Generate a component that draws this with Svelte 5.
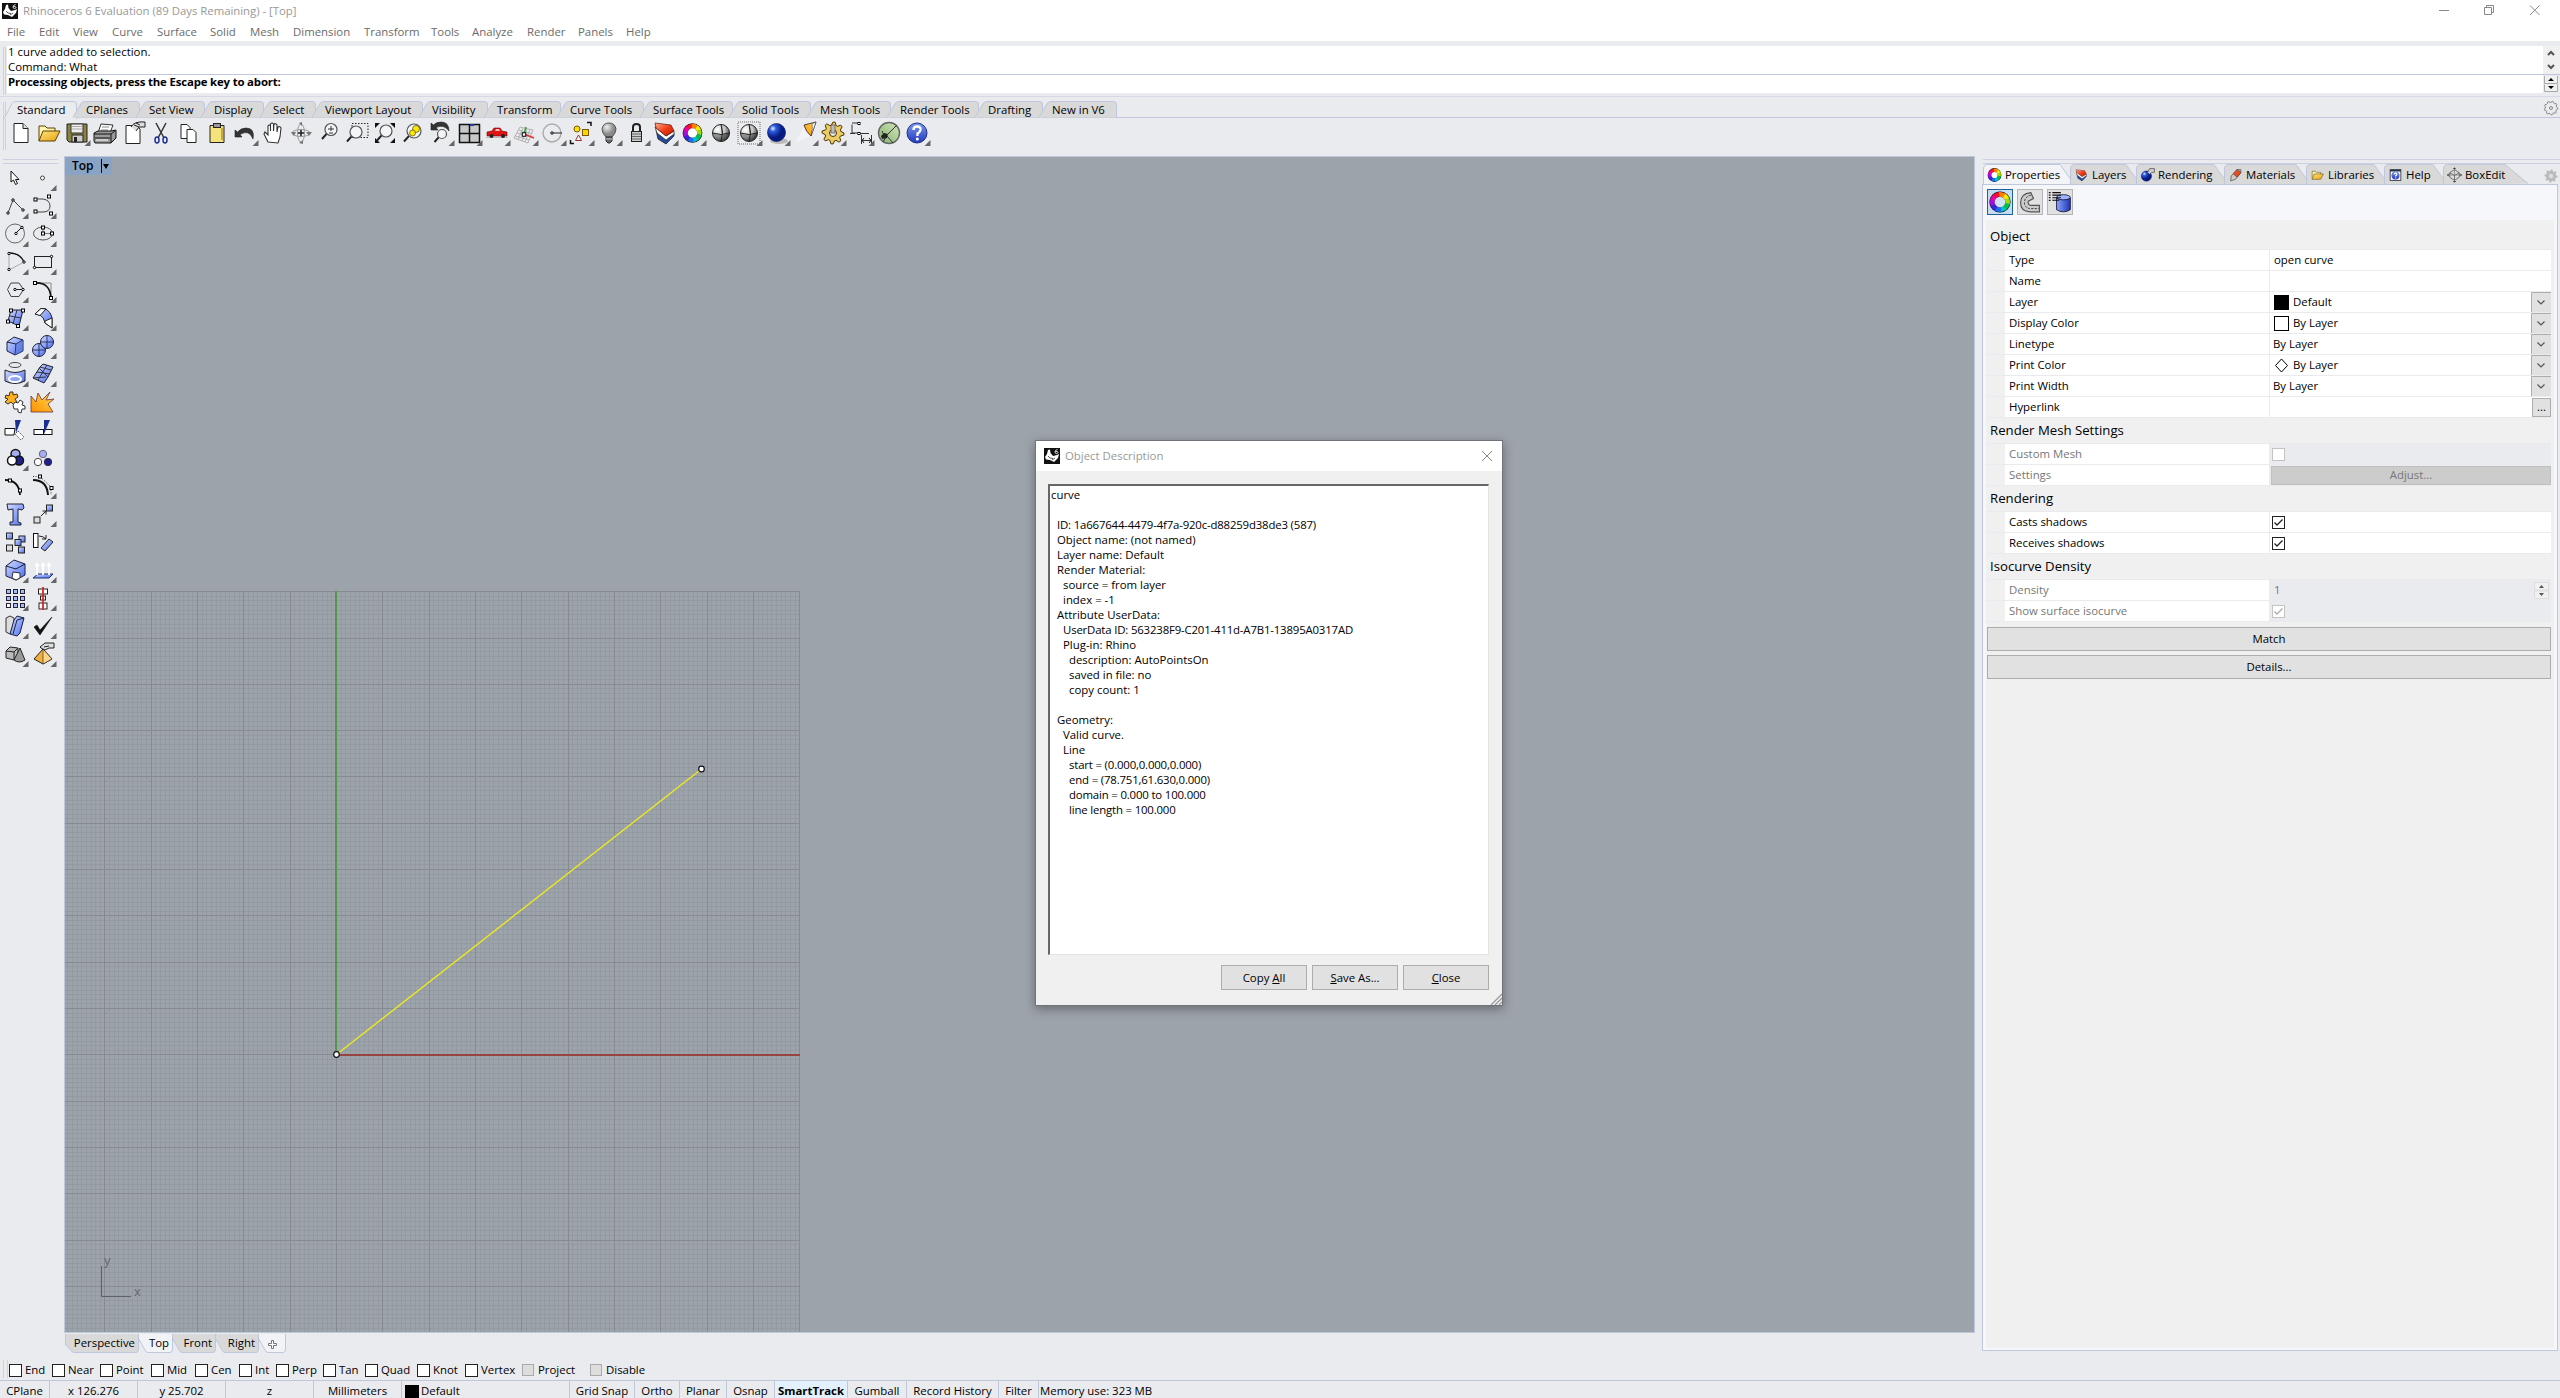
<script>
  const menus = [
    ['File', 32], ['Edit', 34], ['View', 39], ['Curve', 45], ['Surface', 53], ['Solid', 40], ['Mesh', 43],
    ['Dimension', 71], ['Transform', 67], ['Tools', 41], ['Analyze', 55], ['Render', 51], ['Panels', 48], ['Help', 40]
  ];

  // label, right edge
  const toolTabs = [
    ['Standard', 76], ['CPlanes', 139], ['Set View', 204], ['Display', 263], ['Select', 315], ['Viewport Layout', 422],
    ['Visibility', 487], ['Transform', 560], ['Curve Tools', 643], ['Surface Tools', 732], ['Solid Tools', 810],
    ['Mesh Tools', 890], ['Render Tools', 978], ['Drafting', 1042], ['New in V6', 1116]
  ].map(([label, end], i, all) => ({ label, start: i ? all[i - 1][1] : 7, end, w: end - (i ? all[i - 1][1] : 7) }));

  const sq = (x, y, s = 3, f = '#fff') => `<rect x="${x - s / 2}" y="${y - s / 2}" width="${s}" height="${s}" fill="${f}" stroke="#000"/>`;
  const dot = (x, y) => `<circle cx="${x}" cy="${y}" r="1.2" fill="#fff" stroke="#000"/>`;
  const wheel = (cx, cy, r, sw, inner = '#fff') => {
    const cols = ['#ffe800', '#9be000', '#00c24a', '#00c0c8', '#1c6cf0', '#3a22e0', '#a010e0', '#f000a8', '#f01030', '#ff8000'];
    const n = cols.length;
    let s = `<circle cx="${cx}" cy="${cy}" r="${r + sw / 2 + 0.6}" fill="#111"/>`;
    cols.forEach((c, i) => {
      const a = ((i / n) * 360 - 60) * Math.PI / 180, b = (((i + 1.08) / n) * 360 - 60) * Math.PI / 180;
      s += `<path d="M${(cx + r * Math.cos(a)).toFixed(2)} ${(cy + r * Math.sin(a)).toFixed(2)}A${r} ${r} 0 0 1 ${(cx + r * Math.cos(b)).toFixed(2)} ${(cy + r * Math.sin(b)).toFixed(2)}" fill="none" stroke="${c}" stroke-width="${sw}"/>`;
    });
    return s + `<circle cx="${cx}" cy="${cy}" r="${r - sw / 2}" fill="${inner}"/>`;
  };
  const lens = (cx, cy, r, f = '#f4f5f7') => `<path d="M${cx - r * 0.7} ${cy + r * 0.7}L${cx - r - 3} ${cy + r + 3.5}" stroke="#222" stroke-width="2"/><circle cx="${cx}" cy="${cy}" r="${r}" fill="${f}" stroke="#555" stroke-width="1.2"/>`;
  const layers = '<path d="M5 11L15 20L23 14V17L15 25L7 20Z" fill="#234a9c" stroke="#111" stroke-width=".7"/><path d="M4 8L15 17L23 12V15L15 21L6 14Z" fill="#fff" stroke="#222" stroke-width=".7"/><path d="M4 4L20 6L23 12L15 17L5 9Z" fill="url(#red)" stroke="#511" stroke-width=".7"/>';
  const folder = '<path d="M4 22V7H10L12 9H20V12" fill="#fff3b0" stroke="#5a4300"/><path d="M4 22L8 12H25L20 22Z" fill="url(#gold)" stroke="#5a4300"/>';
  const gearPath = (cx, cy, r, n, d) => {
    let p = '';
    for (let i = 0; i < n * 4; i++) {
      const a = (i / (n * 4)) * Math.PI * 2, k = i % 4 < 2 ? r : r - d;
      p += `${i ? 'L' : 'M'}${(cx + k * Math.cos(a)).toFixed(1)} ${(cy + k * Math.sin(a)).toFixed(1)}`;
    }
    return p + 'Z';
  };
  const metal = '<circle cx="14" cy="14" r="8.500" fill="url(#ball)" stroke="#222"/><path d="M14 14V5.500Q17 9 16 14ZM5.500 14Q14 17 22.500 14Q22 22 14 22.500Q6 22 5.500 14Z" fill="#222" opacity=".35"/><path d="M14 5.500Q17 14 14 22.500M5.500 14Q14 17 22.500 14" fill="none" stroke="#222"/>';

  const top = [
    ['<path d="M7 4.500H16L21 9.500V23.500H7Z" fill="#fff" stroke="#222"/><path d="M16 4.500V9.500H21" fill="#ddd" stroke="#222"/>'],
    [folder],
    ['<path d="M4 5H24V23H6L4 21Z" fill="#8b8340" stroke="#222"/><rect x="8" y="5" width="12" height="9" fill="#eee" stroke="#333"/><path d="M9 7.500H19M9 10H19" stroke="#aaa"/><rect x="9" y="16" width="11" height="7" fill="#ccc" stroke="#222"/><rect x="11" y="18" width="3" height="5" fill="#222"/>', 1],
    ['<path d="M10 5L22 6L19 14H7Z" fill="#fff" stroke="#333"/><path d="M11 8H18M10 11H17" stroke="#888"/><path d="M3 14L7 12H20L25 11V19L20 24H4L3 22Z" fill="#999" stroke="#111"/><path d="M3 15H20L24 12M4 19H19M20 15V24" stroke="#111" fill="none"/><path d="M5 21H17" stroke="#fff"/>'],
    ['<path d="M7 6.500H17L21 10V24.500H7Z" fill="#fff" stroke="#222"/><path d="M12 8Q15 2 26 3V8H20L17 12" fill="#ddd" stroke="#222"/><path d="M15 6L20 8M17 4L21 6" stroke="#222"/>'],
    ['<path d="M9 4L17 19M19 4L11 19" stroke="#333" stroke-width="1.500"/><ellipse cx="10" cy="21" rx="2" ry="3" fill="none" stroke="#1e2f8c" stroke-width="1.500"/><ellipse cx="18" cy="21" rx="2" ry="3" fill="none" stroke="#1e2f8c" stroke-width="1.500"/>'],
    ['<path d="M6 5.500H12L15 8.500V19.500H6Z" fill="#fff" stroke="#222"/><path d="M12 10.500H18L21 13.500V23.500H12Z" fill="#fff" stroke="#222"/>'],
    ['<path d="M7 6.500H21V23.500H7Z" fill="#f4e27c" stroke="#222"/><rect x="10.500" y="4.500" width="7" height="4" fill="#999" stroke="#222"/><path d="M19 9V21" stroke="#c5a93f" stroke-width="2"/>'],
    ['<path d="M4 11V18H11L9 15.500Q18 10 22 20Q24 9 15 9Q10 9 6.500 13Z" fill="#333" stroke="#222" stroke-width=".6"/>', 1],
    ['<path d="M9 23L5 15L6 13L9 16V7Q10 5 11.500 7V12V5Q13 3 14.500 5V12L15 5Q16.500 4 18 6V13L19 8Q21 7 22 9L21 18L19 24Z" fill="#fff" stroke="#333" stroke-width="1.100"/>'],
    ['<ellipse cx="14" cy="14" rx="9" ry="3.500" fill="none" stroke="#999"/><ellipse cx="14" cy="14" rx="3.500" ry="9" fill="none" stroke="#999"/><path d="M11 14H17M14 11V17" stroke="#222" stroke-width="1.600"/><path d="M4 13L7 17L9 13ZM19 13L22 17L25 13ZM12 4L15 3V7ZM12 24L16 21V25Z" fill="#777"/>'],
    [lens(16, 10.500, 6) + '<path d="M13 10H19M16 7V12M14 14H18" stroke="#333"/>'],
    ['<rect x="9" y="4.500" width="16" height="14" fill="none" stroke="#222" stroke-dasharray="1.500 1.500"/>' + lens(13, 13, 6)],
    ['<path d="M4 9V4H9L4 9M19 4H24V9L19 4M24 19V24H19L24 19M4 19V24H9Z" fill="#111"/>' + lens(15, 12, 6)],
    [lens(15, 12, 7) + '<circle cx="17" cy="10" r="3.500" fill="#ffe800" stroke="#333" stroke-width=".6"/><circle cx="13.500" cy="14" r="3" fill="#ffe800" stroke="#333" stroke-width=".6"/>'],
    ['<path d="M4 4V11H11L9 8.500Q17 5 22 12Q22 3 14 3Q9 3 6.500 6Z" fill="#333" stroke="#222" stroke-width=".6"/>' + lens(15, 15, 4.500), 1],
    ['<rect x="4.500" y="5.500" width="20" height="18" fill="#c8c8c8" stroke="#111" stroke-width="1.500"/><path d="M14.500 5V24M4 14.500H25" stroke="#111" stroke-width="1.500"/><path d="M15 6H19" stroke="#2238b0" stroke-width="2"/>', 1],
    ['<path d="M3 18.500H25" stroke="#bbb"/><path d="M4 17V13L9 12L11 9H17L19 12L24 13V17Z" fill="#e01414" stroke="#700" stroke-width=".6"/><path d="M12 12L13 10H16L17 12Z" fill="#fbb"/><circle cx="8.500" cy="17" r="2" fill="#222"/><circle cx="20" cy="17" r="2" fill="#222"/>', 1],
    ['<path d="M9 8L22 11L17 24L3 19ZM12 9L7 20.500M16 10L11 22M19 10.500L14 23M7.500 11L20.500 14.500M6 14L19 17.500M4.500 17L18 21" fill="none" stroke="#aaa" stroke-width=".9"/><path d="M13 15L23 19" stroke="#d33" stroke-width="1.500"/><path d="M13 15L15 8" stroke="#2a2" stroke-width="1.500"/>' + sq(13, 15.500, 3.500), 1],
    ['<circle cx="13" cy="14" r="9" fill="none" stroke="#aaa" stroke-width="1.400"/><path d="M13 14H23" stroke="#222"/>' + dot(13, 14), 1],
    ['<circle cx="10" cy="10" r="3" fill="#ffe000" stroke="#7a5a00"/><rect x="15.500" y="10.500" width="6" height="6" fill="#ffd400" stroke="#7a5a00"/><path d="M11.500 16L8.500 21.500H14.500Z" fill="#fff" stroke="#933"/><path d="M20 3.500H24V7M3.500 21V24.500H7" fill="none" stroke="#111" stroke-width="1.500"/>', 1],
    ['<path d="M11 18Q7 14 7 10Q8 4 14 4Q20 4 21 10Q21 14 17 18Z" fill="url(#grey)" stroke="#555"/><path d="M11 18H17V22L15 24H13L11 22Z" fill="#666" stroke="#333"/><path d="M11 20H17" stroke="#ccc"/>', 1],
    ['<path d="M10 12V8Q10 5 13.500 5Q17 5 17 8V12" fill="none" stroke="#222" stroke-width="2"/><rect x="8.500" y="12.500" width="10" height="10" fill="#ccc" stroke="#222"/><path d="M9 15H18M9 17.500H18M9 20H18" stroke="#666"/>', 1],
    [layers, 1],
    [wheel(13.500, 14, 7, 4.500), 1],
    [metal],
    ['<rect x="3" y="3" width="22" height="22" fill="none" stroke="#aaa" stroke-width="2" stroke-dasharray="1 1"/>' + metal, 1],
    ['<ellipse cx="16" cy="22" rx="9" ry="3" fill="#bbb"/><circle cx="13.500" cy="13.500" r="9" fill="url(#blueball)" stroke="#06186a" stroke-width=".7"/>', 1],
    ['<path d="M4 24L12 9L19 17Z" fill="#fff" opacity=".4"/><path d="M13 6L25 3L20 17Q15 13 13 6Z" fill="url(#orange)" stroke="#222" stroke-width=".8"/><path d="M25 3L20 17Q22 9 21 5Z" fill="#fff" stroke="#444" stroke-width=".6"/>', 1],
    [`<path d="${gearPath(14, 14, 11, 8, 3)}" fill="#eccb62" stroke="#4a3300"/><circle cx="14" cy="14" r="3.500" fill="#eaebef" stroke="#4a3300"/><rect x="12" y="6" width="4" height="8" fill="#bbb" stroke="#555" stroke-width=".7"/>`, 1],
    ['<path d="M5 5.500V14M3 14.500H8M5 4H12M12 14.500H22M14.500 16V25M24.500 16V25M15 21.500H24M5 14L12 14" fill="none" stroke="#333"/><path d="M17 19L15 21.500L17 24M22 19L24 21.500L22 24" fill="none" stroke="#111"/>' + sq(12, 4.500, 2) + sq(12, 14.500, 2), 1],
    ['<circle cx="14" cy="14" r="10.500" fill="url(#green)" stroke="#666" stroke-width="1.400"/><path d="M22 6L13 15M7 12L9 16M12 17L18 24M8 23L11 18" stroke="#333" stroke-width="1"/><path d="M6 17L9 14L13 15L12 19L7 20Z" fill="#222"/>'],
    ['<circle cx="14" cy="14" r="10" fill="url(#help)" stroke="#1d2f8a"/><path d="M10.500 11Q10.500 7.500 14 7.500Q18 7.500 17.500 11Q17 13 14.500 14.500V17" fill="none" stroke="#fff" stroke-width="2.300"/><circle cx="14.300" cy="20" r="1.500" fill="#fff"/>', 1]
  ];

  const side = [
    ['<path d="M10 7V18L12.500 16L14.500 20.500L16.500 19.500L14.500 15.500H18Z" fill="#fff" stroke="#111"/>'],
    ['<circle cx="13.500" cy="14" r="2" fill="#fff" stroke="#444"/>', 1],
    ['<path d="M7 21L12 8L22 18" fill="none" stroke="#444"/>' + dot(7, 21) + dot(12, 8) + dot(22, 18), 1],
    ['<path d="M6 7H14Q21 8 21 14Q21 20 14 20H6" fill="none" stroke="#444"/>' + sq(6.5, 7.5) + sq(20, 4.5) + sq(6.5, 19.5) + sq(22, 21.5), 1],
    ['<circle cx="14" cy="13.500" r="9.500" fill="none" stroke="#666"/><path d="M15 13L21 7" stroke="#111"/>' + dot(15, 13.5) + dot(21, 7.5), 1],
    ['<ellipse cx="14" cy="13.500" rx="9.500" ry="6.500" fill="none" stroke="#555"/><path d="M14 7V13.500H23" fill="none" stroke="#777"/>' + sq(14, 7.5) + sq(14, 13.5) + sq(23, 13.5), 1],
    ['<path d="M8 5V22L23 14" fill="none" stroke="#aaa"/><path d="M8 5Q19 5 23 14" fill="none" stroke="#111" stroke-width="1.300"/>' + dot(8, 5.5) + dot(8, 21.5) + dot(23, 14), 1],
    ['<rect x="5.500" y="8.500" width="17" height="11" fill="none" stroke="#222"/>' + dot(5.5, 19.5) + dot(22.5, 8.5), 1],
    ['<path d="M10 7H18L22.500 13.500L18 20.500H10L6.500 13.500Z" fill="none" stroke="#444"/><path d="M14 13.500H22" stroke="#222"/>' + dot(14, 13.5) + dot(22, 13.5), 1],
    ['<path d="M6 7H22V22" fill="none" stroke="#888"/><path d="M6 7Q21 6 22 22" fill="none" stroke="#111" stroke-width="1.700"/>' + sq(6, 7) + sq(22, 22), 1],
    ['<path d="M10 6H22L18 22L7 17Z" fill="url(#blue)" stroke="#222"/><path d="M16 6L12 20M9 12L20 14" stroke="#334" fill="none"/>' + sq(10, 6.5) + sq(22, 6.5) + sq(7, 17.5) + sq(17, 22), 1],
    ['<path d="M6 10L12 4.500H16Q22 8 23 14V24L16 19Q15 13 11 11Z" fill="url(#blue)" stroke="#222"/><path d="M6 10L12 4.500L17 5L11 11.500ZM16 17L23 14V24L16 19Z" fill="#fff" stroke="#222"/>', 1],
    ['<path d="M6 10L13 5L22 8V19L14 23L6 19Z" fill="url(#blue)" stroke="#1a2040"/><path d="M6 10L15 12L22 8M15 12L14 23" fill="none" stroke="#1a2040"/><path d="M15 12L22 8V19L14 23Z" fill="#5a78d8" opacity=".6"/>', 1],
    ['<circle cx="10" cy="18" r="6.500" fill="url(#blue)" stroke="#1a2040"/><circle cx="18" cy="10" r="6.500" fill="url(#blue)" stroke="#1a2040"/><path d="M18 4V16M12 10H24M10 12V24M4 18H16" stroke="#1a2040" stroke-width=".8"/>', 1],
    ['<ellipse cx="14" cy="5" rx="6" ry="2.500" fill="none" stroke="#444"/><path d="M4 10Q14 15 24 10V21Q14 26 4 21Z" fill="url(#blue)" stroke="#222"/><ellipse cx="14" cy="19" rx="6" ry="3" fill="#8fa4f0" stroke="#fff" stroke-width="2"/>', 1],
    ['<path d="M4 18L11 7L14 4L24 7L19 17L15 23Z" fill="url(#blue)" stroke="#222"/><path d="M8 12L21 14M11 7L22 10M9 20L18 5M4 18L17 17M10 8L19 17" fill="none" stroke="#334"/>', 1],
    ['<path d="M5 7L8 8L9 4L12 4V7L16 6L17 9L14 11L16 14L13 17L10 14L7 16L4 14L7 11L4 10Z" fill="#ffb01c" stroke="#333"/><path d="M12 17L14 14L17 15L19 12L22 14L21 17L24 18V21L21 21L20 25L17 24L17 21L13 21Z" fill="#fff" stroke="#333"/>'],
    ['<path d="M2 24V8L7 14L9 5L13 12L21 4L17 12L25 11L19 16L24 24Z" fill="url(#orange)" stroke="#633" stroke-width=".8"/>'],
    ['<path d="M4 12.500H14L13 19H4Z" fill="#fff" stroke="#111"/><path d="M14 4H20L15 17Z" fill="#1a2f90"/><path d="M17 15L23 21L20 24L14 18Z" fill="#fff" stroke="#555" stroke-dasharray="1.500 1"/>'],
    ['<rect x="5" y="13.500" width="18" height="5" fill="#fff" stroke="#111"/><path d="M14.500 13V19" stroke="#111"/><path d="M15 4H21L15 18Z" fill="#1a2f90"/>'],
    ['<circle cx="14.500" cy="10" r="4.500" fill="#a4aef0" stroke="#111" stroke-width="1.500"/><circle cx="18" cy="16.500" r="4.500" fill="#20208c" stroke="#111" stroke-width="1.500"/><circle cx="11" cy="16.500" r="4.500" fill="#fff" stroke="#111" stroke-width="1.500"/>', 1],
    ['<circle cx="14" cy="10" r="3.700" fill="#a4aef0" stroke="#667"/><circle cx="19" cy="18" r="3.700" fill="#20208c" stroke="#334"/><circle cx="9" cy="18" r="3.700" fill="#fff" stroke="#444"/>'],
    ['<path d="M4 8Q18 8 19 23" fill="none" stroke="#111" stroke-width="1.800"/>' + sq(9, 8.5) + sq(19, 18.5)],
    ['<path d="M4 4.500H11L22 15V23" fill="none" stroke="#333" stroke-dasharray="1 1.500"/><path d="M4 8Q18 8 19 23" fill="none" stroke="#111" stroke-width="2"/>' + sq(11, 4.5) + sq(22.5, 16), 1],
    ['<path d="M6 4H22L23 8L21 10L17 9V22L20 23V25H9V22L12 22V9L7 10Z" fill="url(#blue)" stroke="#223"/>'],
    ['<rect x="5" y="17" width="6" height="6" fill="#ddd" stroke="#222"/><rect x="17.500" y="5" width="6" height="6" fill="url(#blue)" stroke="#222"/><path d="M12 16L17 11M13.500 11H17V14.500" fill="none" stroke="#222"/>', 1],
    ['<g stroke="#222"><rect x="5.500" y="5" width="6" height="6" fill="url(#blue)"/><rect x="18" y="8" width="6" height="6" fill="url(#blue)"/><rect x="14" y="11.500" width="6" height="6" fill="url(#blue)"/><rect x="5.500" y="17" width="6" height="6" fill="#ddd"/><rect x="17.500" y="19" width="6" height="6" fill="url(#blue)"/></g>'],
    ['<rect x="4.500" y="5.500" width="4.500" height="14" fill="#fff" stroke="#111"/><path d="M10 8Q14 8 17 11M17 7V11H13" fill="none" stroke="#222"/><path d="M12 20L20 11L24 14L16 23Z" fill="url(#blue)" stroke="#222"/>'],
    ['<path d="M5 10L13 4L24 8V19L15 24L5 20Z" fill="url(#blue)" stroke="#1a2040"/><path d="M5 10L15 13L24 8" fill="none" stroke="#1a2040"/><path d="M12 16L19 17V22L15 24L11 22Z" fill="#fff" stroke="#333"/>', 1],
    ['<path d="M4 22L9 18H24L20 22Z" fill="url(#blue)" stroke="#1a2f70"/><path d="M8 19V9M14 19V9M20 19V9" stroke="#fff" stroke-width="1.800"/><path d="M5.500 10L8 6L10.500 10ZM11.500 10L14 6L16.500 10ZM17.500 10L20 6L22.500 10Z" fill="#fff"/>', 1],
    [[5, 12, 19].map((y) => [5, 12, 19].map((x) => `<rect x="${x + 0.5}" y="${y + 0.5}" width="4" height="4" fill="${x === 5 && y === 19 ? '#fff' : '#a9b9ff'}" stroke="#223"/>`).join('')).join(''), 1],
    ['<g fill="#fff" stroke="#222"><rect x="9.500" y="5" width="9" height="5"/><rect x="11.500" y="12" width="5" height="4"/><rect x="10" y="19" width="8" height="6"/></g><path d="M14 3V26" stroke="#d22" stroke-width="1.800"/>', 1],
    ['<path d="M5 6L9 4L13 6V20L9 22L5 20Z" fill="#ddd" stroke="#333"/><path d="M13 8L16 4L23 6L19 21L16 24L9 22Z" fill="url(#blue)" stroke="#1a2040"/><path d="M16 8L12 22M16 8L23 6" fill="none" stroke="#1a2040"/>', 1],
    ['<path d="M5 15L8 13L11 18L23 5L11 23Z" fill="#111" stroke="#111" stroke-width=".6"/>', 1],
    ['<path d="M5 11L9 7L17 8V15L13 20L5 18Z" fill="#bbb" stroke="#222"/><path d="M5 11L13 12L17 8M13 12V20" fill="none" stroke="#222"/><path d="M19 8L24 20Q18 24 13 20Z" fill="#999" stroke="#222"/>', 1],
    ['<path d="M14 9L23 19L14 24L5 19Z" fill="#f0b040" stroke="#222"/><path d="M14 9L14 24L23 19Z" fill="#fbd68a" stroke="#222" stroke-width=".6"/><path d="M11 7L16 3H25V8H20L16 10L12 8Z" fill="#ddd" stroke="#222"/><path d="M15 7L20 6" stroke="#222"/>', 1]
  ];

  const help = '<rect x="4" y="4" width="20" height="20" fill="#fff" stroke="#223" stroke-width="1.500"/><path d="M4 6H24" stroke="#234" stroke-width="3"/><circle cx="14" cy="15" r="7.500" fill="url(#help)"/><path d="M11.500 13Q12 10.500 14 10.500Q17 11 16.500 13Q16 14.500 14.300 15.500V17" fill="none" stroke="#fff" stroke-width="2"/><circle cx="14.300" cy="19.500" r="1.200" fill="#fff"/>';
  const panelTabs = [
    ['Properties', 2070, wheel(14, 14, 9, 6.5)],
    ['Layers', 2136, layers],
    ['Rendering', 2224, '<circle cx="12" cy="16" r="9.500" fill="url(#blueball)" stroke="#06186a"/><path d="M14 9L18 2H27V9H22L18 13Z" fill="#ccc" stroke="#222"/>'],
    ['Materials', 2306, '<path d="M5 25L6 16L16 4L24 4L24 10L14 22Z" fill="#ccc" stroke="#222"/><path d="M10 12L18 4L24 9L17 18Z" fill="#e8501c" stroke="#522"/>'],
    ['Libraries', 2384, folder],
    ['Help', 2443, help],
    ['BoxEdit', 2528, '<path d="M14 4L23 10V18L14 24L5 18V10ZM5 10L14 15L23 10M14 15V24" fill="#ddd" stroke="#555" stroke-width="1.500"/><path d="M14 0V28M0 14H28" stroke="#777" stroke-width="1.300"/><path d="M11 3L14 0L17 3ZM11 25L14 28L17 25ZM3 11L0 14L3 17ZM25 11L28 14L25 17Z" fill="#333"/>']
  ].map(([label, end, icon], i, all) => ({ label, icon, w: end - (i ? all[i - 1][1] : 1983), first: i === 0, last: i === all.length - 1 }));

  const panelTools = [
    wheel(14, 14, 9, 5.5, '#cfe3f5'),
    '<path d="M15 3Q3 4 3 15Q3 25 14 25.500H25V18H16Q11 18 12 13L18 10Z" fill="#ccc" stroke="#555" stroke-width="1.400"/><path d="M15 6Q7.500 8 7.500 15Q8 21.500 15 21.700H24" fill="none" stroke="#222" stroke-dasharray="2.500 1.500"/>',
    '<path d="M10 9V23Q18 28 26 23V9Z" fill="url(#cyl)" stroke="#113"/><ellipse cx="18" cy="8.500" rx="8" ry="3" fill="#9fb4ff" stroke="#113"/><path d="M5 3H15M5 6H15M5 9H15M5 12H13" stroke="#111" stroke-width="1.300"/><path d="M1 3H3M1 6H3M1 9H3M1 12H3" stroke="#111" stroke-width="1.500"/>'
  ];

  const sections = [
    { title: 'Object', rows: [
      { k: 'Type', v: 'open curve' }, { k: 'Name', v: '' },
      { k: 'Layer', v: 'Default', sw: 'black', drop: true }, { k: 'Display Color', v: 'By Layer', sw: 'white', drop: true },
      { k: 'Linetype', v: 'By Layer', drop: true, tight: true }, { k: 'Print Color', v: 'By Layer', sw: 'diamond', drop: true },
      { k: 'Print Width', v: 'By Layer', drop: true, tight: true }, { k: 'Hyperlink', v: '', more: true }] },
    { title: 'Render Mesh Settings', rows: [{ k: 'Custom Mesh', off: true, box: true }, { k: 'Settings', off: true, adjust: true }] },
    { title: 'Rendering', rows: [{ k: 'Casts shadows', box: true, on: true }, { k: 'Receives shadows', box: true, on: true }] },
    { title: 'Isocurve Density', rows: [{ k: 'Density', v: '1', off: true, spin: true }, { k: 'Show surface isocurve', off: true, box: true, on: true }] }
  ];

  const report = `curve

  ID: 1a667644-4479-4f7a-920c-d88259d38de3 (587)
  Object name: (not named)
  Layer name: Default
  Render Material:
    source = from layer
    index = -1
  Attribute UserData:
    UserData ID: 563238F9-C201-411d-A7B1-13895A0317AD
    Plug-in: Rhino
      description: AutoPointsOn
      saved in file: no
      copy count: 1

  Geometry:
    Valid curve.
    Line
      start = (0.000,0.000,0.000)
      end = (78.751,61.630,0.000)
      domain = 0.000 to 100.000
      line length = 100.000`;
  const reportLines = report.split('\n').map((l) => ({ text: l.trim(), numeric: /\d{3}/.test(l), indent: (l.length - l.trimStart().length) * 3 }));

  const viewTabs = [['Perspective', 74], ['Top', 34], ['Front', 43], ['Right', 43], ['', 27]];
  const snaps = [['End', 43], ['Near', 48], ['Point', 51], ['Mid', 44], ['Cen', 44], ['Int', 37], ['Perp', 47], ['Tan', 42], ['Quad', 52], ['Knot', 48], ['Vertex', 57], ['Project', 68], ['Disable', 70]];
  const status = [['CPlane', 50], ['x 126.276', 88], ['y 25.702', 88], ['z', 88], ['Millimeters', 88], ['Default', 168], ['Grid Snap', 65], ['Ortho', 45], ['Planar', 47], ['Osnap', 48], ['SmartTrack', 73], ['Gumball', 59], ['Record History', 92], ['Filter', 40]];

  // Construction plane grid: 10 minor cells per major line
  const ox = 271, oy = 897.4, unit = 4.632;
  const grid = [];
  for (let i = -100; i <= 100; i++) {
    const x = Math.round(ox + i * unit), y = Math.round(oy - i * unit);
    const major = i % 10 === 0;
    if (x >= 0) grid.push({ x1: x + 0.5, x2: x + 0.5, y1: 434, y2: 1176, major });
    if (y <= 1176) grid.push({ x1: 0, x2: 734.5, y1: y + 0.5, y2: y + 0.5, major });
  }
  grid.sort((a, b) => a.major - b.major);
</script>

{#snippet cell(icon, fly)}
  <svg class="cell" viewBox="0 0 28 28" width="28" height="28">
    {@html icon}
    {#if fly}<path d="M27.500 21V27H21.500Z" fill="#666" />{/if}
  </svg>
{/snippet}

{#snippet rhino()}
  <svg class="rhino" viewBox="0 0 16 16" width="16" height="16">
    <rect width="16" height="16" fill="#111" />
    <path d="M1 9L3 6L4 2L6 1.500L6.500 5L9 8L13 7L15 6L14 10L10 14L6 12L2 11.500Z" fill="#fff" />
    <path d="M4 8L6 10L9 10.500M8 12L11 10" stroke="#333" stroke-width=".8" fill="none" />
    <path d="M13.500 1.500Q11 2 11 4Q11 5.500 12.500 5.500Q14 5.500 14 4.200Q14 3.200 11.500 3.600" stroke="#eee" stroke-width=".9" fill="none" />
  </svg>
{/snippet}

<svg class="defs" width="0" height="0">
  <defs>
    <linearGradient id="blue" x1="0" y1="0" x2="1" y2="1"><stop offset="0" stop-color="#d4dcff" /><stop offset="1" stop-color="#4a6cf0" /></linearGradient>
    <linearGradient id="red" x1="0" y1="0" x2="1" y2="1"><stop offset="0" stop-color="#ffb090" /><stop offset=".5" stop-color="#f04018" /><stop offset="1" stop-color="#c01800" /></linearGradient>
    <linearGradient id="gold" x1="0" y1="0" x2="1" y2="1"><stop offset="0" stop-color="#ffe680" /><stop offset="1" stop-color="#e8a010" /></linearGradient>
    <linearGradient id="orange" x1="0" y1="1" x2="1" y2="0"><stop offset="0" stop-color="#ff9000" /><stop offset="1" stop-color="#ffd850" /></linearGradient>
    <linearGradient id="cyl"><stop offset="0" stop-color="#8ca2ff" /><stop offset="1" stop-color="#1f35b0" /></linearGradient>
    <linearGradient id="help" x1="0" y1="0" x2="0" y2="1"><stop offset="0" stop-color="#7d98f0" /><stop offset="1" stop-color="#2038b8" /></linearGradient>
    <linearGradient id="green" x1="1" y1="0" x2="0" y2="1"><stop offset="0" stop-color="#cfe6b8" /><stop offset="1" stop-color="#86b070" /></linearGradient>
    <radialGradient id="grey" cx=".35" cy=".3"><stop offset="0" stop-color="#eee" /><stop offset="1" stop-color="#888" /></radialGradient>
    <radialGradient id="ball" cx=".3" cy=".3" r=".75"><stop offset="0" stop-color="#fff" /><stop offset=".55" stop-color="#c8c8c8" /><stop offset="1" stop-color="#444" /></radialGradient>
    <radialGradient id="blueball" cx=".3" cy=".28"><stop offset="0" stop-color="#e8f0ff" /><stop offset=".35" stop-color="#2c5ce0" /><stop offset="1" stop-color="#061a80" /></radialGradient>
  </defs>
</svg>

<div class="app">
  <header class="title">
    {@render rhino()}
    <span>Rhinoceros 6 Evaluation (89 Days Remaining) - [Top]</span>
    <svg class="winbtns" viewBox="0 0 106 22" width="106" height="22"><path d="M0 10.500H10M45.500 7.500H52.500V14.500H45.500ZM47.500 7V5.500H54.500V12.500H53M91 5.500L100.500 15M100.500 5.500L91 15" fill="none" stroke="#888" /></svg>
  </header>
  <nav class="menu">
    {#each menus as [label, w]}<span style:width="{w}px">{label}</span>{/each}
  </nav>

  <section class="command">
    <div class="grip"></div>
    <div class="cmdtext">
      <div class="history"><p>1 curve added to selection.</p><p>Command: What</p></div>
      <div class="prompt">Processing objects, press the Escape key to abort:</div>
    </div>
    <svg class="cmdscroll" viewBox="0 0 17 47" width="17" height="47">
      <rect width="17" height="28" fill="#f0f0f0" />
      <path d="M5 9L8 6L11 9M5 19L8 22L11 19" fill="none" stroke="#555" stroke-width="2" />
      <path d="M0 28.500H17" stroke="#c0c6da" />
      <path d="M1.500 30V37.500H14.500V30M1.500 38.500V45.500H14.500V38.500" fill="#f0f0f0" stroke="#aaa" />
      <path d="M5 35L8 32L11 35ZM5 40L8 43L11 40Z" fill="#000" />
    </svg>
  </section>

  <section class="tools">
    <div class="grip"></div>
    <div class="toolbody">
      <div class="tooltabs">
        {#each toolTabs as t, i}
          <div class="tooltab" style:width="{t.w}px">
            <svg class="shape" width={t.w + 2} height="18">
              <path d="M-3 {i ? 16.5 : 18}L5 2.500Q6 .500 9 .500H{t.w - 3}Q{t.w + 0.5} .500 {t.w + 0.5} 3V{i ? 16.5 : 18}" fill={i ? '#d9d9d9' : '#eaebef'} stroke="#bfc7dd" />
            </svg>
            <span>{t.label}</span>
          </div>
        {/each}
        <svg class="options" viewBox="0 0 16 16" width="16" height="16"><path d={gearPath(8, 8, 6.8, 9, 1.2)} fill="none" stroke="#888" /><circle cx="8" cy="8" r="1.500" fill="none" stroke="#888" /></svg>
      </div>
      <div class="iconrow">{#each top as [icon, fly]}{@render cell(icon, fly)}{/each}</div>
    </div>
  </section>

  <main>
    <aside class="side">{#each side as [icon, fly]}{@render cell(icon, fly)}{/each}</aside>

    <section class="view">
      <div class="viewport">
        <svg class="scene" width="1909" height="1176">
          {#each grid as g}<line x1={g.x1} y1={g.y1} x2={g.x2} y2={g.y2} class:major={g.major} class="minor" />{/each}
          <path d="M271 434V898" stroke="#4f9a4a" stroke-width="2" class="crisp" />
          <path d="M271 898H735" stroke="#99453f" stroke-width="2" class="crisp" />
          <path d="M271.500 897.500L636.500 612" stroke="#ecea1c" stroke-width="1.400" />
          <circle cx="271.500" cy="897.500" r="2.800" fill="#fff" stroke="#111" stroke-width="1.200" />
          <circle cx="636.500" cy="612" r="2.800" fill="#fff" stroke="#111" stroke-width="1.200" />
          <path d="M36.500 1109V1139.500H66" fill="none" stroke="#5e6266" />
          <text x="39" y="1108">y</text><text x="69" y="1139">x</text>
        </svg>
        <div class="vplabel"><b>Top</b><i></i></div>
      </div>
      <div class="viewtabs">
        {#each viewTabs as [label, w], i}
          <div class="viewtab" style:width="{w}px">
            <svg class="shape" width={w + 1} height="20"><path d="M{i ? -3 : 0.5} 0{i ? '' : 'V11'}L6 16Q7 18.500 9 18.500H{w - 3}Q{w - 0.5} 18.500 {w - 0.5} 15V0" fill={label === 'Top' || !label ? '#f2f3f6' : '#d9d9d9'} stroke="#bfc7dd" /></svg>
            {#if label}<span>{label}</span>{:else}
              <svg class="plus" viewBox="0 0 9 9" width="9" height="9"><path d="M3.500 .500H5.500V3.500H8.500V5.500H5.500V8.500H3.500V5.500H.500V3.500H3.500Z" fill="#fff" stroke="#777" /></svg>
            {/if}
          </div>
        {/each}
      </div>
    </section>

    <aside class="panel">
      <div class="ptabs">
        {#each panelTabs as t}
          <div class="ptab" style:width="{t.w}px">
            <svg class="shape" width={t.w + 6} height="21">
              <path d={t.last ? `M.5 21V4Q1 .5 4 .5H62L${t.w} 19.5` : `M.5 21V4Q1 .5 4 .5H${t.w - 10}L${t.w + 4} 20`} fill={t.first ? '#f3f4f8' : '#d9d9d9'} stroke="#bfc7dd" />
            </svg>
            <svg class="picon" viewBox="0 0 28 28" width="16" height="16">{@html t.icon}</svg>
            <span>{t.label}</span>
          </div>
        {/each}
        <svg class="pgear" viewBox="0 0 16 16" width="14" height="14"><path d={gearPath(8, 8, 7.5, 8, 1.8)} fill="#bbb" /><circle cx="8" cy="8" r="2.500" fill="#ddd" /></svg>
      </div>
      <div class="pbody">
        <div class="ptools">
          {#each panelTools as icon, i}
            <div class="ptool" class:active={i === 0}><svg viewBox="0 0 28 28" width="24" height="24">{@html icon}</svg></div>
          {/each}
        </div>
        <div class="props">
          {#each sections as s}
            <h3>{s.title}</h3>
            {#each s.rows as r}
              <div class="row" class:off={r.off}>
                <div class="key">{r.k}</div>
                <div class="val" class:tight={r.tight}>
                  {#if r.sw === 'diamond'}
                    <svg class="diamond" viewBox="0 0 15 15" width="15" height="15"><path d="M7.500 1L13.500 7.500L7.500 14L1.500 7.500Z" fill="#fff" stroke="#000" /></svg>
                  {:else if r.sw}<i class="swatch {r.sw}"></i>{/if}
                  {#if r.box}
                    <svg class="check" viewBox="0 0 13 13" width="13" height="13"><rect x=".5" y=".5" width="12" height="12" fill="#fff" stroke={r.off ? '#c3c3c3' : '#222'} />{#if r.on}<path d="M2.500 6.500L5 9L10.500 3.500" fill="none" stroke={r.off ? '#aaa' : '#222'} stroke-width="1.300" />{/if}</svg>
                  {/if}
                  {#if r.adjust}<div class="adjust">Adjust...</div>{/if}
                  {#if r.v}<span>{r.v}</span>{/if}
                  {#if r.drop}<svg class="drop" viewBox="0 0 20 20" width="20" height="20"><path d="M.5 20V.5H20" fill="#e1e1e1" stroke="#adadad" /><rect x="1" y="1" width="19" height="19" fill="#e1e1e1" /><path d="M6.500 8.500L10 12L13.500 8.500" fill="none" stroke="#555" stroke-width="1.200" /></svg>{/if}
                  {#if r.more}<div class="more">...</div>{/if}
                  {#if r.spin}<svg class="spin" viewBox="0 0 15 17" width="15" height="17"><path d="M.5 .5H14.500V8H.5ZM.5 9H14.500V16.500H.5Z" fill="#f0f0f0" stroke="#ddd" /><path d="M5 6L7.500 3L10 6ZM5 11L7.500 14L10 11Z" fill="#555" /></svg>{/if}
                </div>
              </div>
            {/each}
          {/each}
          <div class="wide first">Match</div>
          <div class="wide">Details...</div>
        </div>
      </div>
    </aside>
  </main>

  <section class="snaps">
    {#each snaps as [label, w], i}
      <div class="snap" style:width="{w}px"><i class:dis={i > 10}></i><span>{label}</span></div>
    {/each}
  </section>
  <footer class="status">
    {#each status as [label, w]}
      <div class="stat" class:left={label === 'Default'} class:hot={label === 'SmartTrack'} style:width="{w}px">{#if label === 'Default'}<i></i>{/if}{label}</div>
    {/each}
    <span>Memory use: 323 MB</span>
  </footer>

  <div class="dialog">
    <div class="dtitle">
      {@render rhino()}<span>Object Description</span>
      <svg viewBox="0 0 12 12" width="12" height="12"><path d="M1 1L11 11M11 1L1 11" stroke="#888" /></svg>
    </div>
    <div class="report">
      {#each reportLines as l}<p class:numeric={l.numeric} style:padding-left="{l.indent}px">{l.text}</p>{/each}
    </div>
    <div class="dbtns">
      <div class="dbtn">Copy&nbsp;<u>A</u>ll</div>
      <div class="dbtn"><u>S</u>ave As...</div>
      <div class="dbtn"><u>C</u>lose</div>
    </div>
    <svg class="resize" viewBox="0 0 12 12" width="12" height="12"><path d="M1 12L12 1M5 12L12 5M9 12L12 9" stroke="#999" stroke-width="1.300" /></svg>
  </div>
</div>

<style>
  :global(body) { margin: 0; overflow: hidden; }
  .defs { position: absolute; }
  .app { width: 2560px; height: 1398px; display: flex; flex-direction: column; background: #eaebef; font: 11.4px/16px 'Open Sans', sans-serif; color: #000; white-space: nowrap; overflow: hidden; position: relative; }
  .app * { box-sizing: border-box; }
  svg { display: block; flex: none; }
  p, h3 { margin: 0; font-weight: 400; }
  i { font-style: normal; }

  .title { height: 23px; background: #fff; display: flex; align-items: center; padding: 0 15px 1px 2px; color: #999; letter-spacing: -.03px; }
  .title span { margin-left: 5px; flex: 1; }
  .menu { height: 18px; background: #fff; display: flex; padding: 1px 0 0 7px; color: #6b6b6b; }

  .command { height: 56px; padding-top: 5px; display: flex; background: #eaebef; border-bottom: 1px solid #d5d9e6; }
  .grip { width: 3px; height: 48px; margin: 1px 1px 0 3px; border: solid #ccd0e0; border-width: 0 1px; flex: none; }
  .cmdtext { flex: 1; height: 47px; background: #fff; }
  .history { height: 29px; border-bottom: 1px solid #bfc7dd; padding: 0 1px; }
  .history p { line-height: 12px; height: 13px; }
  .history p + p { line-height: 16px; }
  .prompt { font-weight: 700; line-height: 14px; padding-left: 1px; letter-spacing: -.16px; }
  .cmdscroll { background: #eaebef; }

  .tools { height: 59px; padding-top: 4px; display: flex; }
  .toolbody { flex: 1; }
  .tooltabs { height: 17px; border-bottom: 1px solid #bfc7dd; display: flex; position: relative; }
  .tooltab { position: relative; flex: none; }
  .tooltab .shape { position: absolute; left: 0; top: 0; overflow: visible; }
  .tooltab span { position: absolute; left: 10px; top: 1px; }
  .options { margin: -1px 1px 0 auto; }
  .iconrow { display: flex; margin-top: 1px; }

  main { flex: 1; display: flex; min-height: 0; }
  .side { width: 64px; padding: 8px 0 0 1px; display: grid; grid-template-columns: 28px 28px; grid-auto-rows: 28px; align-content: start; position: relative; }
  .side::before { content: ''; position: absolute; left: 3px; top: 3px; width: 55px; height: 3px; border: solid #ccd0e0; border-width: 1px 0; }

  .view { width: 1911px; }
  .viewport { height: 1177px; border: 1px solid #bfc7dd; background: #9da3ab; position: relative; overflow: hidden; }
  .scene { display: block; }
  .minor { stroke: #949aa2; shape-rendering: crispEdges; }
  .major { stroke: #868a93; }
  .crisp { shape-rendering: crispEdges; }
  .scene text { font: 13px 'Open Sans', sans-serif; fill: #65696d; }
  .vplabel { position: absolute; left: 0; top: 0; width: 47px; height: 18px; background: #89a3c4; display: flex; align-items: center; padding-left: 7px; }
  .vplabel b { font-size: 12px; font-weight: 600; width: 29px; }
  .vplabel i { height: 14px; width: 10px; border-left: 1px solid #000; display: flex; align-items: center; }
  .vplabel i::after { content: ''; border: 3.5px solid transparent; border-top: 5px solid #000; border-bottom: 0; margin-left: 1px; }

  .viewtabs { display: flex; height: 20px; padding: 1px 0 0 1px; }
  .viewtab { position: relative; }
  .viewtab .shape { position: absolute; left: 0; top: 0; }
  .viewtab span { position: absolute; right: 4px; top: 1px; }
  .plus { position: absolute; left: 9px; top: 6px; }

  .panel { flex: 1; padding: 8px 2px 5px 7px; display: flex; flex-direction: column; position: relative; }
  .panel::before { content: ''; position: absolute; left: 8px; right: 0; top: 3px; height: 3px; border: solid #ccd0e0; border-width: 1px 0; }
  .ptabs { display: flex; height: 20px; padding-left: 1px; }
  .ptab { position: relative; flex: none; display: flex; align-items: center; padding: 2px 0 0 4px; }
  .ptab .shape { position: absolute; left: 0; top: 0; overflow: visible; }
  .picon { position: relative; width: 15px; }
  .ptab span { position: relative; margin-left: 3px; }
  .pgear { margin: 5px 0 0 auto; }
  .pbody { flex: 1; border: 1px solid #bfc7dd; background: #f6f7fa; position: relative; z-index: 1; }
  .ptools { height: 35px; padding: 4px 0 0 4px; display: flex; gap: 4px; }
  .ptool { width: 26px; height: 26px; border: 1px solid #b5b5b5; background: #e1e1e1; }
  .ptool.active { border-color: #1e5f9c; background: #c5ddf3; }
  .props { background: #f0f0f0; height: 1128px; margin: 0 3px 0 3px; padding: 4px 3px 0 1px; }
  .props h3 { font-size: 13.2px; line-height: 25px; height: 26px; padding-left: 3px; border-bottom: 1px solid #e9e9ee; }
  .row { display: flex; height: 21px; border-bottom: 1px solid #eaebef; }
  .key { width: 265px; margin-left: 18px; padding-left: 4px; line-height: 20px; background: #fff; border-right: 1px solid #eaebef; }
  .val { flex: 1; background: #fff; padding-left: 4px; display: flex; align-items: center; position: relative; }
  .val.tight { padding-left: 3px; }
  .off .key { color: #777; }
  .off .val { background: #eaebef; color: #777; }
  .swatch { width: 15px; height: 15px; border: 1px solid #000; margin-right: 4px; background: #fff; }
  .swatch.black { background: #000; }
  .diamond { margin-right: 4px; }
  .check { margin-left: -2px; }
  .drop, .spin, .more { margin-left: auto; }
  .spin { margin-right: 2px; }
  .more { width: 19px; height: 19px; border: 1px solid #adadad; background: #e1e1e1; text-align: center; line-height: 15px; }
  .adjust { flex: 1; margin: 1px 0 0 -3px; height: 19px; border: 1px solid #bfbfbf; background: #ccc; text-align: center; line-height: 16px; color: #777; }
  .wide { height: 24px; border: 1px solid #adadad; background: #e1e1e1; text-align: center; line-height: 21px; margin-top: 4px; }
  .wide.first { margin-top: 5px; }

  .snaps { height: 24px; display: flex; padding: 4px 0 0 9px; position: relative; }
  .snaps::before { content: ''; position: absolute; left: 3px; top: 4px; width: 3px; height: 18px; border: solid #ccd0e0; border-width: 0 1px; }
  .snap { display: flex; align-items: center; }
  .snap i { width: 13px; height: 13px; border: 1px solid #222; background: #fff; margin-right: 3px; flex: none; }
  .snap i.dis { width: 12px; height: 12px; border-color: #aaa; background: #ddd; margin-right: 4px; }

  .status { height: 18px; border-top: 1px solid #bfc7dd; display: flex; line-height: 20px; }
  .stat { text-align: center; border-right: 1px solid #bfc7dd; flex: none; overflow: hidden; }
  .stat.left { display: flex; padding-left: 3px; }
  .stat i { width: 14px; height: 14px; background: #000; margin: 4px 2px 0 0; }
  .stat.hot { background: #e2f1fc; font-weight: 700; }
  .status span { padding-left: 1px; }

  .dialog { position: absolute; left: 1035px; top: 440px; width: 468px; height: 566px; border: 1px solid #6f747a; background: #f0f0f0; box-shadow: 0 3px 10px rgba(0, 0, 0, .35); display: flex; flex-direction: column; line-height: 15px; z-index: 5; }
  .dtitle { height: 30px; background: #fff; display: flex; align-items: center; padding: 0 9px 1px 8px; color: #999; }
  .dtitle span { flex: 1; margin-left: 5px; }
  .report { margin: 13px 13px 0 12px; height: 471px; background: #fff; border: solid #666; border-width: 2px 1px 1px 2px; border-right-color: #e3e3e3; border-bottom-color: #e3e3e3; padding: 1px 0 0 1px; }
  .report p { height: 15px; }
  .report .numeric { letter-spacing: -.17px; }
  .dbtns { display: flex; justify-content: flex-end; gap: 5px; margin: 10px 13px 0 0; }
  .dbtn { width: 86px; height: 25px; border: 1px solid #adadad; background: #e1e1e1; display: flex; align-items: center; justify-content: center; white-space: pre; padding-bottom: 1px; }
  .resize { position: absolute; right: 0; bottom: 0; }
</style>
